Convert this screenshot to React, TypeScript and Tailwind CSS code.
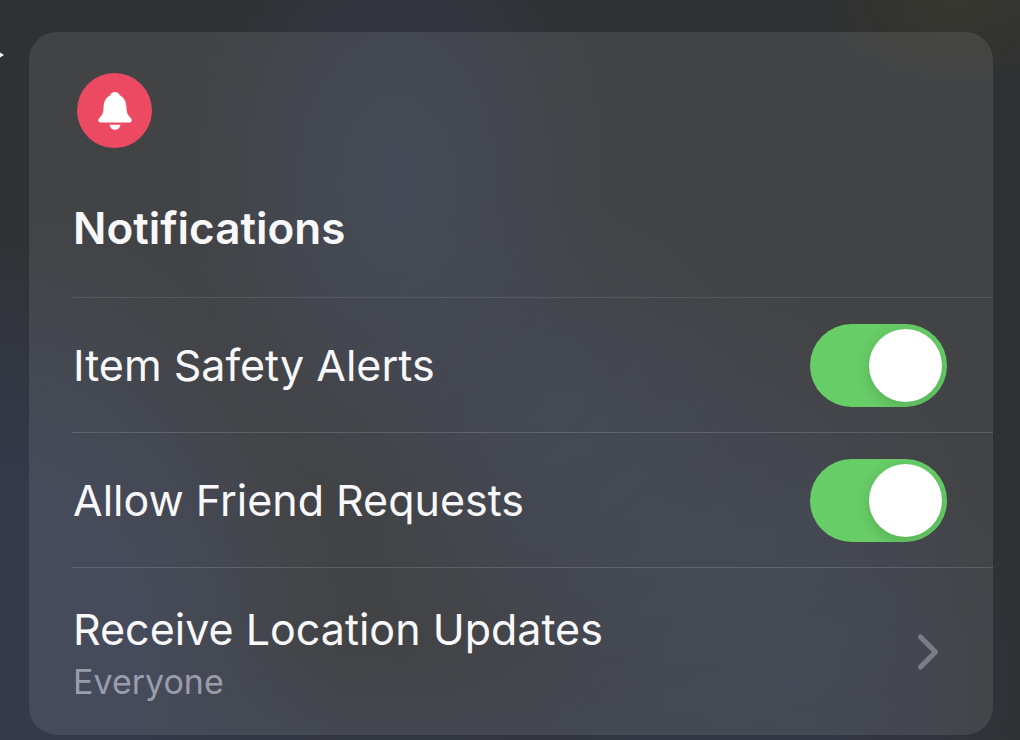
import { useState } from "react";
import { ChevronRight } from "lucide-react";

const settings = [
  { id: "item-safety", label: "Item Safety Alerts" },
  { id: "friend-requests", label: "Allow Friend Requests" },
];

const BellIcon = () => (
  <svg viewBox="0 0 34 38" className="h-[38px] w-[34px]" fill="white" aria-hidden="true">
    <path d="M17 0c2.200 0 3.900 1.200 4.800 3.200 4.200 2.200 6.400 6.300 6.600 11.300.2 4.700.6 7.200 2.200 9.100l2.500 2.900c1.500 1.900.5 4-1.700 4H2.600c-2.200 0-3.200-2.100-1.700-4l2.500-2.900c1.600-1.900 2-4.400 2.200-9.100.2-5 2.400-9.100 6.600-11.300C13.100 1.200 14.800 0 17 0z" />
    <path d="M11.500 32.700h11c-.5 3-2.700 5-5.500 5s-5-2-5.500-5z" />
  </svg>
);

const Toggle = ({ id, label }: { id: string; label: string }) => {
  const [on, setOn] = useState(true);
  return (
    <div className="ml-[43px] flex h-[135px] items-center justify-between border-b border-white/15 pr-[46px] pl-px">
      <label htmlFor={id} className="text-[43px] leading-[52px]">
        {label}
      </label>
      <input
        id={id}
        type="checkbox"
        role="switch"
        checked={on}
        onChange={() => setOn(!on)}
        className="flex h-[83px] w-[137px] shrink-0 cursor-pointer appearance-none items-center overflow-hidden rounded-full bg-white/20 p-[5px] before:h-[73px] before:w-[73px] before:rounded-full before:bg-white before:shadow-[0_4px_14px_rgba(0,0,0,0.15)] checked:justify-end checked:bg-[#67cd67]"
      />
    </div>
  );
};

const App = () => {
  return (
    <main className="relative min-h-screen bg-[#303133] bg-[radial-gradient(ellipse_21%_44%_at_39%_25%,rgba(51,56,71,0.95),rgba(51,56,71,0.65)_45%,transparent),radial-gradient(ellipse_20%_28%_at_54%_54%,rgba(51,56,71,0.7),transparent),radial-gradient(ellipse_30%_34%_at_66%_72%,rgba(51,56,71,0.8),rgba(51,56,71,0.5)_50%,transparent),radial-gradient(ellipse_26%_32%_at_78%_92%,rgba(51,56,71,0.8),rgba(51,56,71,0.5)_50%,transparent),radial-gradient(ellipse_34%_62%_at_0%_90%,#343a4b_40%,transparent),radial-gradient(ellipse_60%_14%_at_40%_102%,rgba(51,56,71,0.8),transparent),radial-gradient(ellipse_14%_12%_at_94%_0%,#36372e,transparent)] pt-8 pr-[27px] pb-[5px] pl-[29px] font-['Inter',sans-serif] text-[#f8f8fb]">
      {/* tip of the mouse pointer at the window edge */}
      <svg viewBox="0 0 4 8" className="absolute top-[51px] left-0 h-2 w-1" fill="white" aria-hidden="true">
        <path d="M0 1.500L4 4 0 6.500z" />
      </svg>
      <section className="rounded-[28px] bg-white/9">
        <header className="ml-[43px] border-b border-white/10 pt-[41px] pb-[43px] pl-px">
          <div className="ml-1 flex h-[75px] w-[75px] items-center justify-center rounded-full bg-[#ec4a63]">
            <BellIcon />
          </div>
          <h1 className="mt-[54px] text-[44px] leading-[52px] font-semibold">Notifications</h1>
        </header>
        {settings.map((s) => (
          <Toggle key={s.id} id={s.id} label={s.label} />
        ))}
        <button className="flex w-full cursor-pointer items-center justify-between pt-[31px] pr-[35px] pb-[30px] pl-[44px] text-left">
          <span>
            <span className="block text-[43px] leading-[60px]">Receive Location Updates</span>
            <span className="block text-[34px] leading-[46px] text-[#9a9cab]">Everyone</span>
          </span>
          <ChevronRight size={60} strokeWidth={2} className="text-[#7a7c86]" />
        </button>
      </section>
    </main>
  );
};

export default App;
